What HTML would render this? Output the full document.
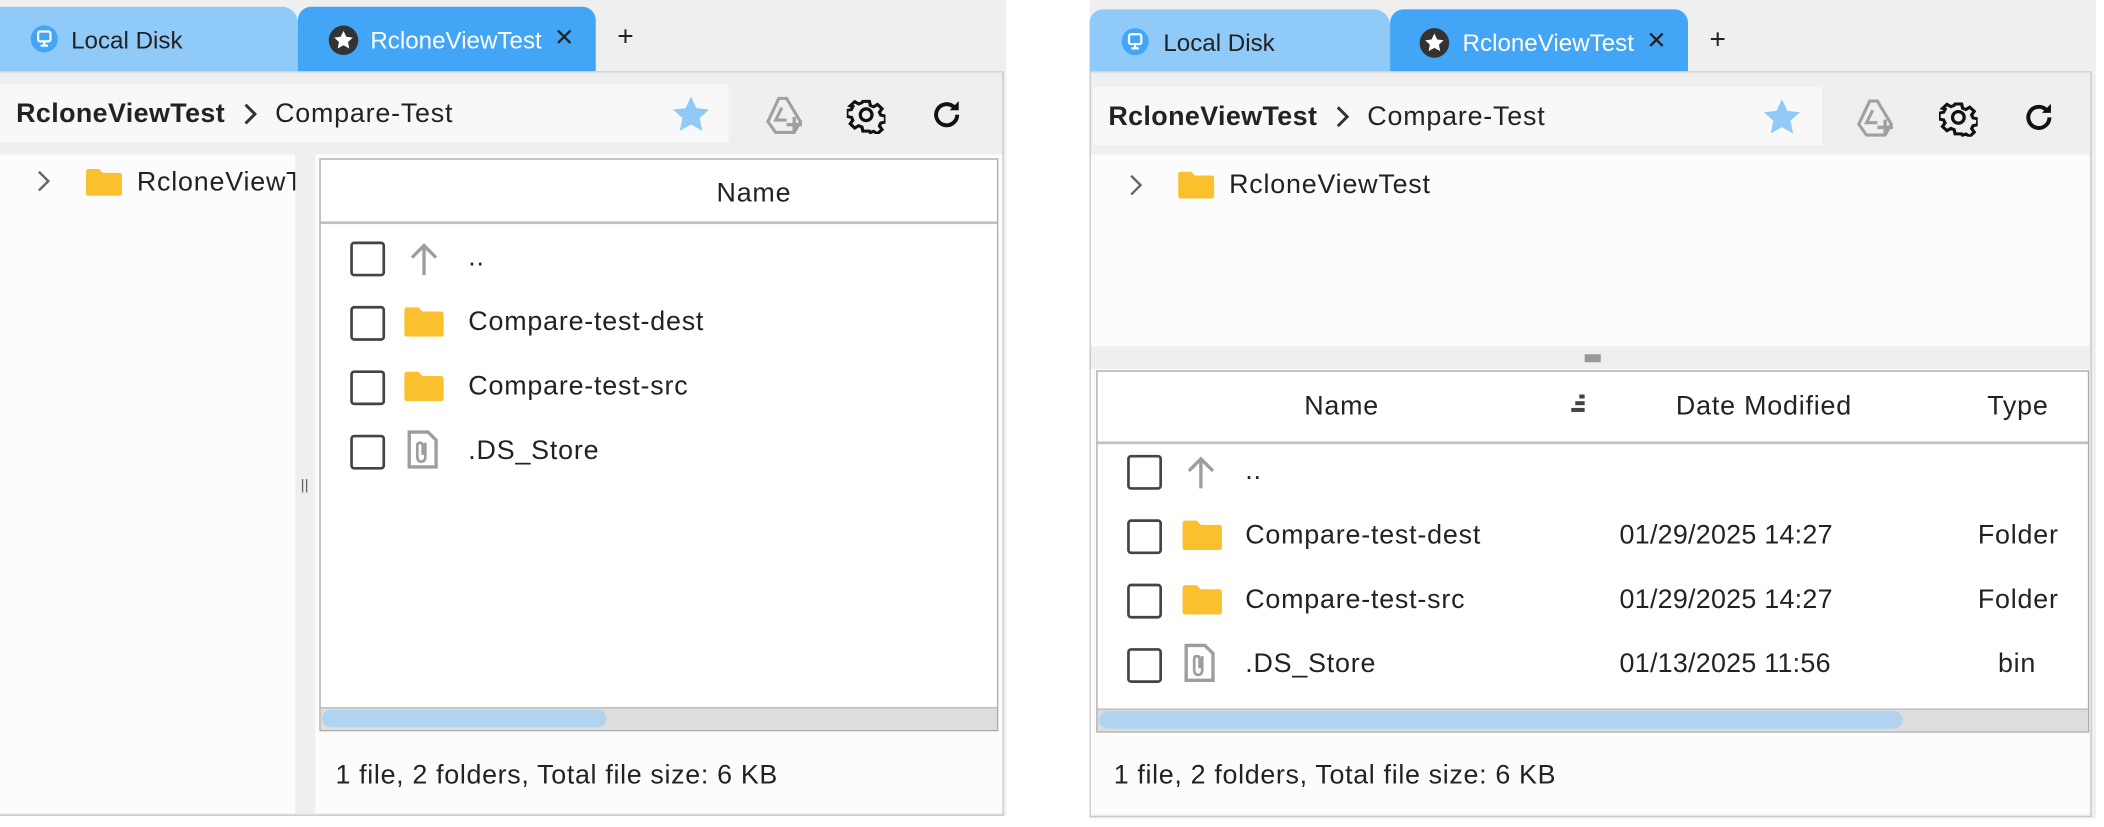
<!DOCTYPE html>
<html><head><meta charset="utf-8"><style>
html,body{margin:0;padding:0;background:#fff;width:2104px;height:826px;overflow:hidden}
#w{position:absolute;left:0;top:0;width:1568px;height:616px;transform:scale(1.3418);transform-origin:0 0;font-family:"Liberation Sans",sans-serif;color:#222}
.a{position:absolute}
.t{font-size:20px;letter-spacing:0.6px;white-space:nowrap}
.tb{font-size:18px;letter-spacing:0}
.cb{position:absolute;width:22px;height:22px;border:2px solid #444;border-radius:3px;background:#fff}
</style></head><body><div id="w">
<svg width="0" height="0" style="position:absolute"><defs>
<symbol id="fd" viewBox="0 0 30 22"><path d="M1 3 Q1 1 3 1 H11 L14 4 H27 Q29 4 29 6 V20 Q29 22 27 22 H3 Q1 22 1 20 Z" fill="#fbc02d"/></symbol>
<symbol id="up" viewBox="0 0 24 26"><path d="M12 25 V3 M3 12 L12 3 L21 12" stroke="#9e9e9e" stroke-width="2.5" fill="none"/></symbol>
<symbol id="fi" viewBox="0 0 24 30"><path d="M2 2 H16 L22 8 V28 H2 Z" fill="#fff" stroke="#9e9e9e" stroke-width="2.5"/><path d="M14 10 V20 Q14 24 11 24 Q8 24 8 20 V12 Q8 10 10 10 Q12 10 12 12 V19" stroke="#9e9e9e" stroke-width="2" fill="none"/></symbol>
<symbol id="gear" viewBox="0 0 24 24"><path d="M10 2h4l.6 2.8 2 .9 2.4-1.6 2.8 2.8-1.6 2.4.9 2 2.8.6v4l-2.8.6-.9 2 1.6 2.4-2.8 2.8-2.4-1.6-2 .9L14 22h-4l-.6-2.8-2-.9L5 19.9 2.2 17.1l1.6-2.4-.9-2L.1 12.1v-4l2.8-.6.9-2L2.2 5 5 2.2l2.4 1.6 2-.9z" fill="none" stroke="#111" stroke-width="2" transform="translate(0,1.9) scale(1,0.92)"/><circle cx="12" cy="12" r="3.6" fill="none" stroke="#111" stroke-width="2"/></symbol>
<symbol id="ref" viewBox="0 0 24 24"><path d="M19 12a7 7 0 1 1-2.2-5.1" fill="none" stroke="#111" stroke-width="2.6"/><path d="M20 3v6h-6z" fill="#111"/></symbol>
<symbol id="drv" viewBox="0 0 26 26"><path d="M9 2h5l9 15-4 7H7l-5-7z" fill="none" stroke="#a0a0a0" stroke-width="2"/><path d="M11 8l-4 8h7" fill="none" stroke="#a0a0a0" stroke-width="2"/><path d="M19 14v10M14 19h10" stroke="#a0a0a0" stroke-width="2.2"/></symbol>
<symbol id="star" viewBox="0 0 24 24"><path d="M12 1.5l3.2 7 7.6.8-5.7 5.1 1.6 7.6L12 18.2 5.3 22l1.6-7.6L1.2 9.3l7.6-.8z" fill="#90caf9"/></symbol>
<symbol id="mon" viewBox="0 0 24 24"><circle cx="12" cy="12" r="11" fill="#42a5f5"/><rect x="7" y="6" width="10" height="8" rx="1.5" fill="none" stroke="#fff" stroke-width="1.8"/><path d="M12 14v3M9 17.5h6" stroke="#fff" stroke-width="1.8"/></symbol>
<symbol id="rs" viewBox="0 0 24 24"><circle cx="12" cy="12" r="11" fill="#333"/><path d="M12 5l2.1 4.4 4.8.6-3.5 3.3.9 4.8-4.3-2.4-4.3 2.4.9-4.8L5.1 10l4.8-.6z" fill="#fff"/></symbol>
<symbol id="chv" viewBox="0 0 12 20"><path d="M3 3l7 7-7 7" fill="none" stroke="#333" stroke-width="2.2"/></symbol>
<symbol id="chg" viewBox="0 0 12 20"><path d="M3 3l7 7-7 7" fill="none" stroke="#666" stroke-width="1.8"/></symbol>
</defs></svg>

<!-- LEFT PANEL -->
<div class="a" style="left:0;top:0;width:750px;height:608px;background:#efefef"></div>
<div class="a" style="left:0;top:5px;width:222px;height:48px;background:#90caf9;border-radius:0 12px 0 0"></div>
<div class="a" style="left:222px;top:5px;width:222px;height:48px;background:#42a5f5;border-radius:10px 10px 0 0"></div>
<svg class="a" style="left:22px;top:18px" width="22" height="22"><use href="#mon"/></svg>
<div class="a t tb" style="left:53px;top:20px">Local Disk</div>
<svg class="a" style="left:244px;top:18px" width="24" height="24"><use href="#rs"/></svg>
<div class="a t tb" style="left:276px;top:20px;color:#fff">RcloneViewTest</div>
<div class="a t tb" style="left:413px;top:18px">✕</div>
<div class="a t" style="left:460px;top:16px;font-size:21px">+</div>
<div class="a" style="left:0;top:53px;width:747px;height:553px;border-right:1px solid #c8c8c8;border-top:1px solid #d0d0d0;border-bottom:1px solid #c8c8c8"></div>
<div class="a" style="left:0;top:63px;width:543px;height:43px;background:#f8f8f8"></div>
<div class="a t" style="left:12px;top:74px;font-weight:bold;letter-spacing:0.3px">RcloneViewTest</div>
<svg class="a" style="left:180px;top:75px" width="12" height="20"><use href="#chv"/></svg>
<div class="a t" style="left:205px;top:74px">Compare-Test</div>
<svg class="a" style="left:500px;top:70px" width="30" height="30"><use href="#star"/></svg>
<svg class="a" style="left:570px;top:71px" width="30" height="30"><use href="#drv"/></svg>
<svg class="a" style="left:631px;top:71px" width="29" height="29"><use href="#gear"/></svg>
<svg class="a" style="left:692px;top:72px" width="27" height="27"><use href="#ref"/></svg>
<div class="a" style="left:0;top:115px;width:220px;height:491px;background:#fcfcfc"></div>
<svg class="a" style="left:26px;top:125px" width="12" height="20"><use href="#chg"/></svg>
<svg class="a" style="left:63px;top:125px" width="29" height="21"><use href="#fd"/></svg>
<div class="a t" style="left:102px;top:125px;width:118px;overflow:hidden">RcloneViewTest</div>
<div class="a" style="left:225px;top:357px;width:1px;height:10px;background:#666;box-shadow:3px 0 #666"></div>
<div class="a" style="left:235px;top:115px;width:512px;height:491px;background:#fcfcfc"></div>
<div class="a" style="left:238px;top:118px;width:504px;height:425px;border:1px solid #aaa;background:#fff"></div>
<div class="a" style="left:239px;top:165px;width:504px;height:2px;background:#c0c0c0"></div>
<div class="a t" style="left:534px;top:133px">Name</div>
<div class="cb" style="left:261px;top:180px"></div>
<svg class="a" style="left:304px;top:180px" width="24" height="26"><use href="#up"/></svg>
<div class="a t" style="left:349px;top:181px">..</div>
<div class="cb" style="left:261px;top:228px"></div>
<svg class="a" style="left:300px;top:228px" width="32" height="23"><use href="#fd"/></svg>
<div class="a t" style="left:349px;top:229px">Compare-test-dest</div>
<div class="cb" style="left:261px;top:276px"></div>
<svg class="a" style="left:300px;top:276px" width="32" height="23"><use href="#fd"/></svg>
<div class="a t" style="left:349px;top:277px">Compare-test-src</div>
<div class="cb" style="left:261px;top:324px"></div>
<svg class="a" style="left:303px;top:320px" width="24" height="30"><use href="#fi"/></svg>
<div class="a t" style="left:349px;top:325px">.DS_Store</div>
<div class="a" style="left:239px;top:527px;width:504px;height:16px;background:#ddd;border-top:1px solid #bbb"></div>
<div class="a" style="left:240px;top:529px;width:212px;height:13px;background:#b0d3f0;border-radius:7px"></div>
<div class="a t" style="left:250px;top:567px;letter-spacing:0.5px">1 file, 2 folders, Total file size: 6 KB</div>

<!-- RIGHT PANEL -->
<div class="a" style="left:812px;top:0;width:750px;height:610px;background:#efefef"></div>
<div class="a" style="left:812px;top:7px;width:224px;height:46px;background:#90caf9;border-radius:10px 12px 0 0"></div>
<div class="a" style="left:1036px;top:7px;width:222px;height:46px;background:#42a5f5;border-radius:10px 10px 0 0"></div>
<svg class="a" style="left:835px;top:20px" width="22" height="22"><use href="#mon"/></svg>
<div class="a t tb" style="left:867px;top:22px">Local Disk</div>
<svg class="a" style="left:1057px;top:20px" width="24" height="24"><use href="#rs"/></svg>
<div class="a t tb" style="left:1090px;top:22px;color:#fff">RcloneViewTest</div>
<div class="a t tb" style="left:1227px;top:20px">✕</div>
<div class="a t" style="left:1274px;top:18px;font-size:21px">+</div>
<div class="a" style="left:812px;top:53px;width:745px;height:554px;border:1px solid #c8c8c8;border-top-color:#d0d0d0"></div>
<div class="a" style="left:815px;top:65px;width:543px;height:43px;background:#f8f8f8"></div>
<div class="a t" style="left:826px;top:76px;font-weight:bold;letter-spacing:0.3px">RcloneViewTest</div>
<svg class="a" style="left:994px;top:77px" width="12" height="20"><use href="#chv"/></svg>
<div class="a t" style="left:1019px;top:76px">Compare-Test</div>
<svg class="a" style="left:1313px;top:72px" width="30" height="30"><use href="#star"/></svg>
<svg class="a" style="left:1383px;top:73px" width="30" height="30"><use href="#drv"/></svg>
<svg class="a" style="left:1445px;top:73px" width="29" height="29"><use href="#gear"/></svg>
<svg class="a" style="left:1506px;top:74px" width="27" height="27"><use href="#ref"/></svg>
<div class="a" style="left:813px;top:115px;width:744px;height:143px;background:#fcfcfc"></div>
<svg class="a" style="left:840px;top:128px" width="12" height="20"><use href="#chg"/></svg>
<svg class="a" style="left:877px;top:127px" width="29" height="21"><use href="#fd"/></svg>
<div class="a t" style="left:916px;top:127px">RcloneViewTest</div>
<div class="a" style="left:1181px;top:264px;width:12px;height:6px;background:#999"></div>
<div class="a" style="left:813px;top:275px;width:744px;height:332px;background:#fcfcfc"></div>
<div class="a" style="left:817px;top:276px;width:738px;height:268px;border:1px solid #aaa;background:#fff"></div>
<div class="a" style="left:818px;top:329px;width:738px;height:2px;background:#c0c0c0"></div>
<div class="a t" style="left:972px;top:292px">Name</div>
<div class="a" style="left:1177px;top:294px;width:4px;height:3px;background:#444"></div>
<div class="a" style="left:1174px;top:299px;width:7px;height:3px;background:#444"></div>
<div class="a" style="left:1171px;top:304px;width:10px;height:3px;background:#444"></div>
<div class="a t" style="left:1249px;top:292px">Date Modified</div>
<div class="a t" style="left:1481px;top:292px">Type</div>
<div class="cb" style="left:840px;top:339px"></div>
<svg class="a" style="left:883px;top:339px" width="24" height="26"><use href="#up"/></svg>
<div class="a t" style="left:928px;top:340px">..</div>
<div class="cb" style="left:840px;top:387px"></div>
<svg class="a" style="left:880px;top:387px" width="32" height="23"><use href="#fd"/></svg>
<div class="a t" style="left:928px;top:388px">Compare-test-dest</div>
<div class="a t" style="left:1207px;top:388px;letter-spacing:0.2px">01/29/2025 14:27</div>
<div class="a t" style="left:1474px;top:388px">Folder</div>
<div class="cb" style="left:840px;top:435px"></div>
<svg class="a" style="left:880px;top:435px" width="32" height="23"><use href="#fd"/></svg>
<div class="a t" style="left:928px;top:436px">Compare-test-src</div>
<div class="a t" style="left:1207px;top:436px;letter-spacing:0.2px">01/29/2025 14:27</div>
<div class="a t" style="left:1474px;top:436px">Folder</div>
<div class="cb" style="left:840px;top:483px"></div>
<svg class="a" style="left:882px;top:479px" width="24" height="30"><use href="#fi"/></svg>
<div class="a t" style="left:928px;top:484px">.DS_Store</div>
<div class="a t" style="left:1207px;top:484px;letter-spacing:0.2px">01/13/2025 11:56</div>
<div class="a t" style="left:1489px;top:484px">bin</div>
<div class="a" style="left:818px;top:528px;width:738px;height:16px;background:#ddd;border-top:1px solid #bbb"></div>
<div class="a" style="left:819px;top:530px;width:599px;height:13px;background:#b0d3f0;border-radius:7px"></div>
<div class="a t" style="left:830px;top:567px;letter-spacing:0.5px">1 file, 2 folders, Total file size: 6 KB</div>
</div></body></html>
